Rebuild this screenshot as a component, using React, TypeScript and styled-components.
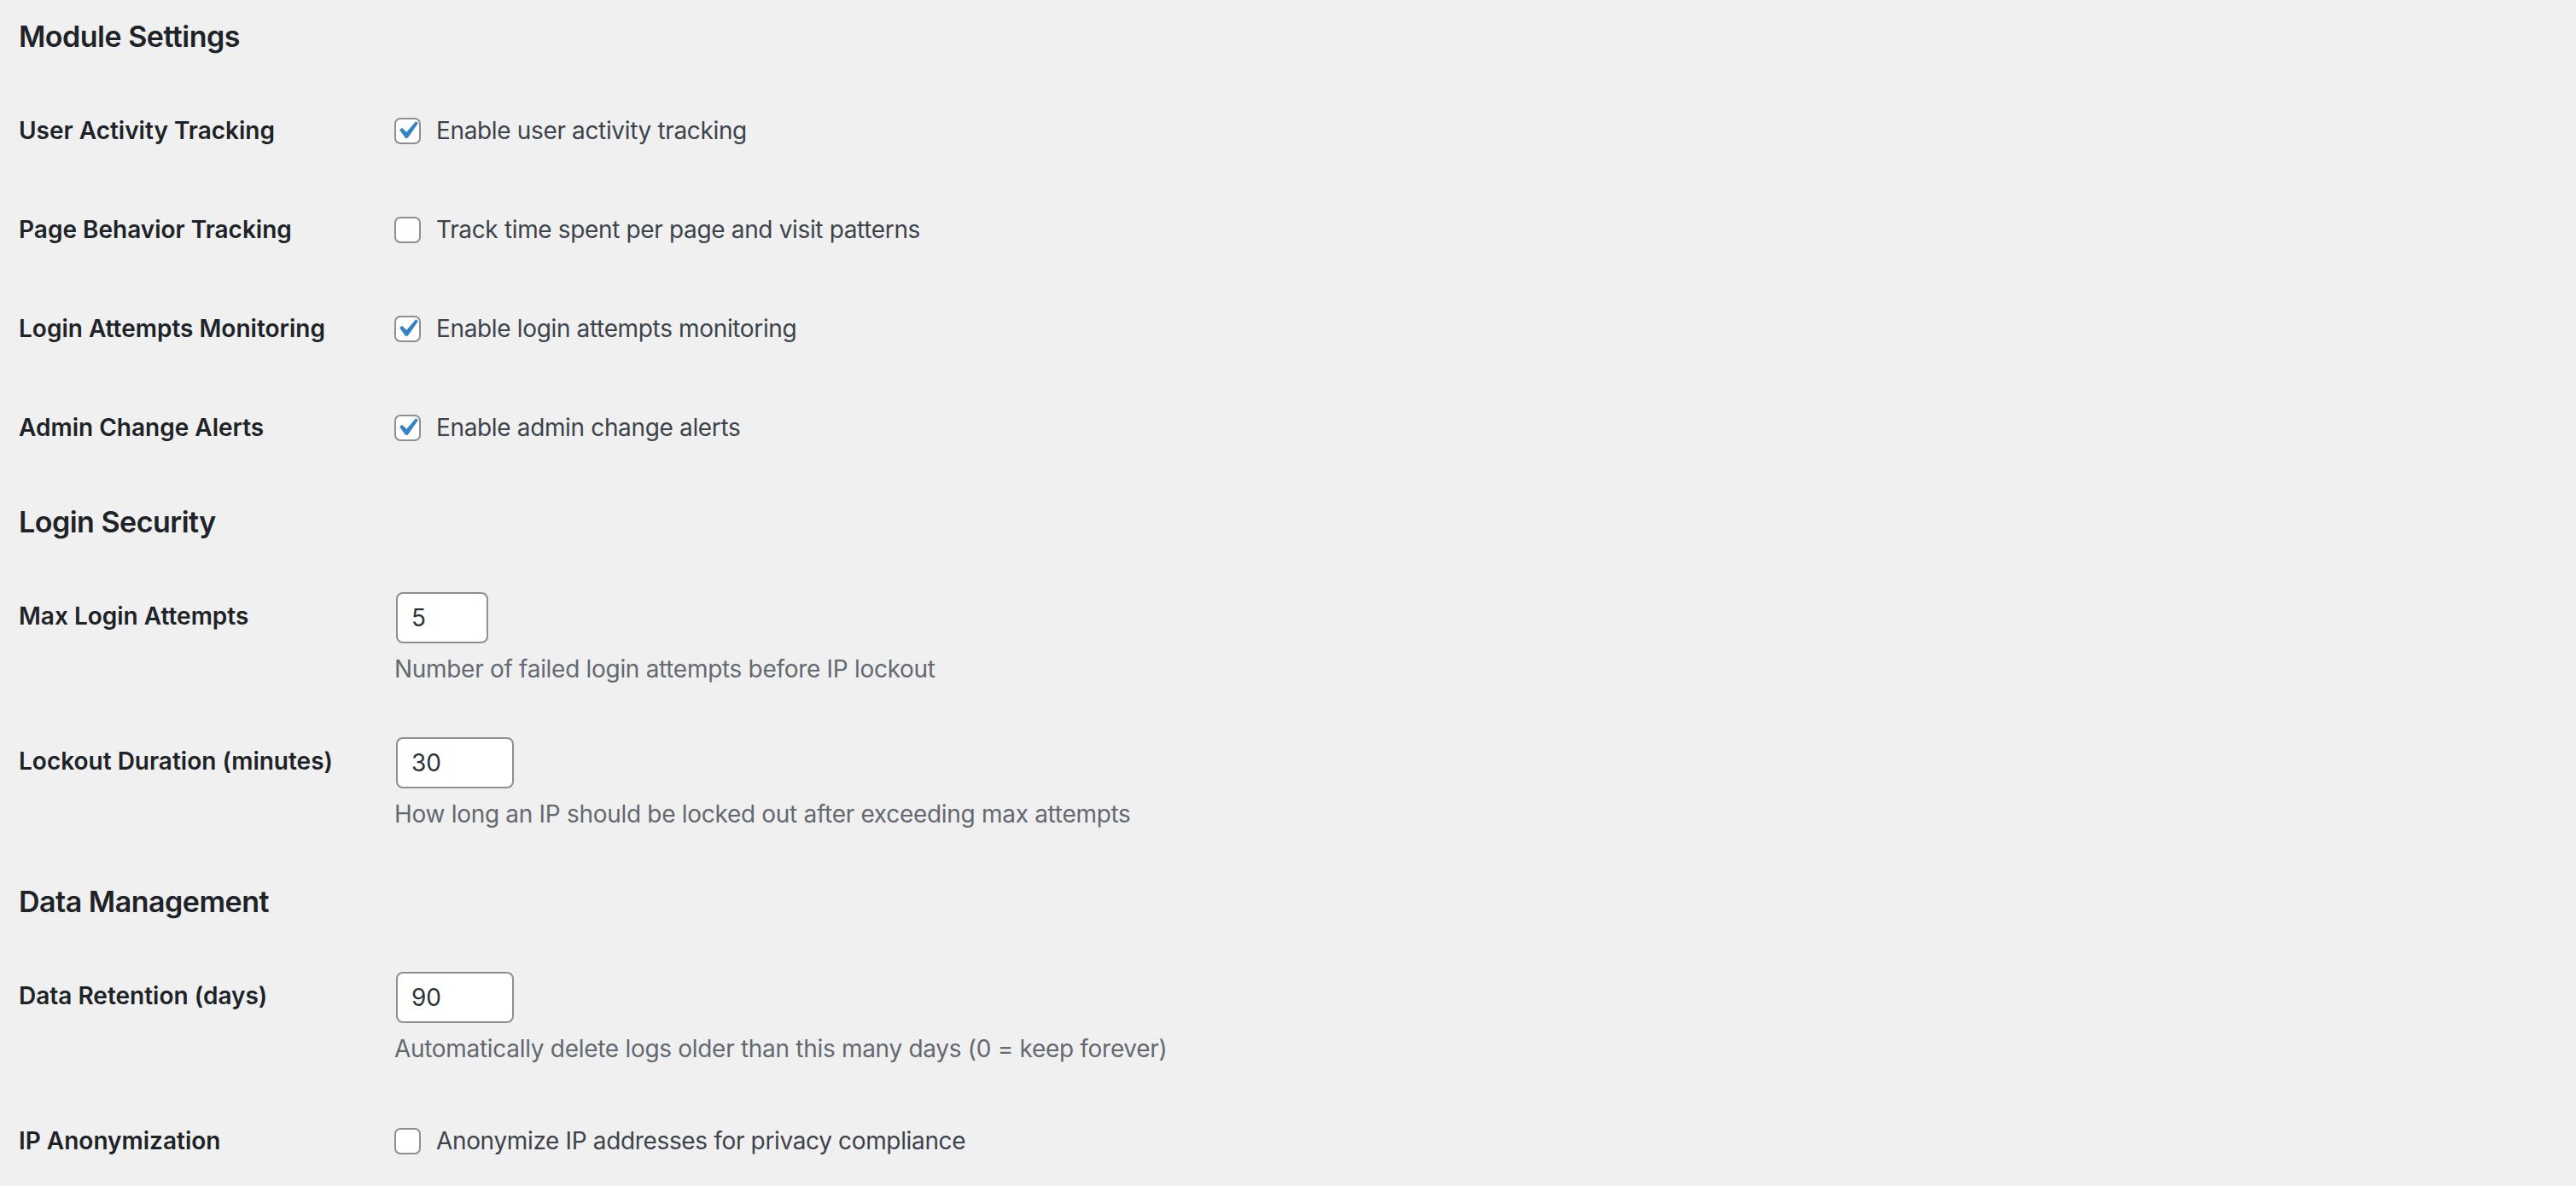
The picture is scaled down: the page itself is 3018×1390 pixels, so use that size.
import React from 'react';
import styled, { createGlobalStyle } from 'styled-components';

type CheckRow = { kind: 'check'; label: string; text: string; checked: boolean };
type NumberRow = { kind: 'number'; label: string; value: string; width: number; help: string };
type Row = CheckRow | NumberRow;

const sections: { title: string; rows: Row[] }[] = [
  {
    title: 'Module Settings',
    rows: [
      { kind: 'check', label: 'User Activity Tracking', text: 'Enable user activity tracking', checked: true },
      { kind: 'check', label: 'Page Behavior Tracking', text: 'Track time spent per page and visit patterns', checked: false },
      { kind: 'check', label: 'Login Attempts Monitoring', text: 'Enable login attempts monitoring', checked: true },
      { kind: 'check', label: 'Admin Change Alerts', text: 'Enable admin change alerts', checked: true },
    ],
  },
  {
    title: 'Login Security',
    rows: [
      { kind: 'number', label: 'Max Login Attempts', value: '5', width: 108, help: 'Number of failed login attempts before IP lockout' },
      { kind: 'number', label: 'Lockout Duration (minutes)', value: '30', width: 138, help: 'How long an IP should be locked out after exceeding max attempts' },
    ],
  },
  {
    title: 'Data Management',
    rows: [
      { kind: 'number', label: 'Data Retention (days)', value: '90', width: 138, help: 'Automatically delete logs older than this many days (0 = keep forever)' },
      { kind: 'check', label: 'IP Anonymization', text: 'Anonymize IP addresses for privacy compliance', checked: false },
    ],
  },
];

export default function App() {
  return (
    <>
      <GlobalStyle />
      <Page>
        {sections.map((s) => (
          <Section key={s.title}>
            <Heading>{s.title}</Heading>
            {s.rows.map((r) => (
              <FormRow key={r.label}>
                <Th>{r.label}</Th>
                {r.kind === 'check' ? (
                  <CheckTd>
                    <CheckLabel>
                      <Box>
                        {r.checked && (
                          <svg viewBox="0 0 20 20" width="42" height="42">
                            <path d="M14.83 4.89l1.34.94-5.81 8.38H9.02L5.78 9.67l1.34-1.25 2.57 2.4z" fill="#3582c4" />
                          </svg>
                        )}
                      </Box>
                      {r.text}
                    </CheckLabel>
                  </CheckTd>
                ) : (
                  <InputTd>
                    <NumberInput $width={r.width} defaultValue={r.value} />
                    <Description>{r.help}</Description>
                  </InputTd>
                )}
              </FormRow>
            ))}
          </Section>
        ))}
      </Page>
    </>
  );
}

const GlobalStyle = createGlobalStyle`
  html, body {
    margin: 0;
    background: #f0f0f1;
  }
  body {
    font-family: Inter, "Noto Sans", sans-serif;
    color: #3c434a;
  }
`;

const Page = styled.div`
  padding: 0 22px;
`;

const Section = styled.section`
  &:first-child h2 {
    margin-top: 19px;
  }
`;

const Heading = styled.h2`
  margin: 29px 0 28px;
  font-size: 34px;
  line-height: 48px;
  font-weight: 600;
  letter-spacing: -0.5px;
  color: #1d2327;
`;

const FormRow = styled.div`
  display: grid;
  grid-template-columns: 420px 1fr;
`;

const Th = styled.div`
  padding: 40px 20px 40px 0;
  font-size: 28px;
  line-height: 36px;
  font-weight: 600;
  color: #1d2327;
`;

const CheckTd = styled.div`
  padding: 40px 20px 40px 20px;
`;

const CheckLabel = styled.label`
  display: flex;
  align-items: center;
  gap: 18px;
  font-size: 28px;
  line-height: 36px;
  letter-spacing: -0.35px;
  color: #3c434a;
`;

const Box = styled.span`
  position: relative;
  flex: none;
  width: 31px;
  height: 31px;
  box-sizing: border-box;
  border: 2px solid #8c8f94;
  border-radius: 7px;
  background: #fff;

  svg {
    position: absolute;
    top: -8px;
    left: -8px;
  }
`;

const InputTd = styled.div`
  padding: 30px 20px 30px 20px;
`;

const NumberInput = styled.input<{ $width: number }>`
  display: block;
  box-sizing: border-box;
  width: ${(p) => p.$width}px;
  height: 60px;
  margin: 0 0 0 2px;
  padding: 0 16px;
  border: 2px solid #8c8f94;
  border-radius: 8px;
  background: #fff;
  font-family: Inter, "Noto Sans", sans-serif;
  font-size: 28px;
  color: #2c3338;
  outline: none;
`;

const Description = styled.p`
  margin: 11px 0 0;
  font-size: 28px;
  line-height: 39px;
  letter-spacing: -0.3px;
  color: #646970;
`;
